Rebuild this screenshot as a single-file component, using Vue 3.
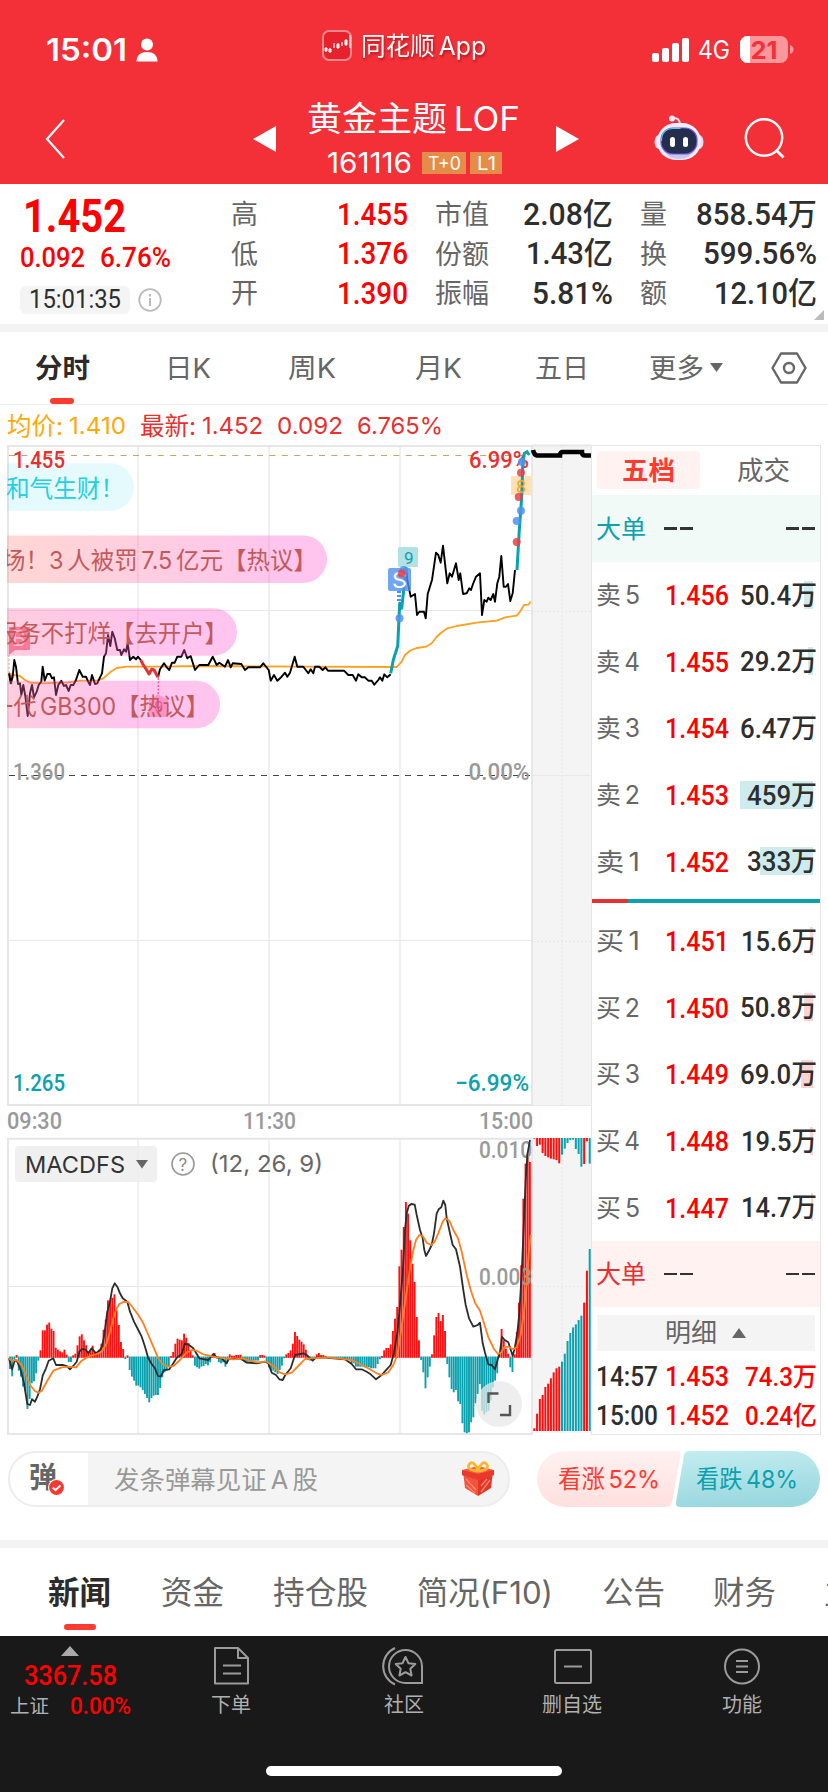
<script setup>
import { h } from 'vue'

// Single line of text fitted to an exact advance width.
const Fit = (p) => {
  const s = +p.s
  const hh = Math.round(s * 1.2)
  return h('svg', { width: p.w, height: hh, viewBox: `0 0 ${p.w} ${hh}`, overflow: 'visible', display: 'block' }, [
    h('text', { x: 0, y: hh / 2 + s * 0.36, 'font-size': s, textLength: p.w, lengthAdjust: 'spacingAndGlyphs' }, p.t),
  ])
}
Fit.props = ['t', 'w', 's']

const stats = [
  { cls: 'c1', rows: [['高', 27, '1.455', 71], ['低', 27, '1.376', 71], ['开', 27, '1.390', 71]] },
  { cls: 'c2', rows: [['市值', 54, '2.08亿', 90], ['份额', 54, '1.43亿', 87], ['振幅', 54, '5.81%', 81]] },
  { cls: 'c3', rows: [['量', 27, '858.54万', 121], ['换', 27, '599.56%', 114], ['额', 27, '12.10亿', 103]] },
]

const sells = [
  ['5', '1.456', '50.4万', 77, 9], ['4', '1.455', '29.2万', 77, 5], ['3', '1.454', '6.47万', 77, 1],
  ['2', '1.453', '459万', 70, 73], ['1', '1.452', '333万', 70, 53],
]
const buys = [
  ['1', '1.451', '15.6万', 76, 3], ['2', '1.450', '50.8万', 77, 9], ['3', '1.449', '69.0万', 77, 12],
  ['4', '1.448', '19.5万', 76, 3], ['5', '1.447', '14.7万', 76, 2],
]

// Chart series are kept at three units per pixel and scaled on output.
const pairs = (s) => s.trim().split(/\s+/).map((p) => p.split(',').map(Number))
const plot = (s, ox, oy) => pairs(s).map(([x, y]) => `${(ox + x / 3).toFixed(1)},${(oy + y / 3).toFixed(1)}`).join(' ')

const price1 = plot('27,730 32,760 38,740 43,690 48,710 54,762 60,760 64,795 70,765 76,798 83,858 90,790 96,765 102,802 110,785 116,765 124,755 128,710 134,752 142,732 150,732 156,745 162,742 168,795 175,765 184,752 192,768 198,765 206,783 212,765 220,765 228,750 238,720 248,740 258,740 263,752 270,765 276,735 285,762 292,760 300,742 306,730 312,680 318,670 324,615 331,648 337,605 344,625 352,660 360,660 364,675 372,658 378,665 383,640 390,690 400,680 408,688 414,680 422,690', 0, 430)
const priceRed = plot('422,690 430,705 440,720 447,732 455,718 462,720 474,742', 0, 430)
const price2 = plot('474,742 480,718 492,700 500,712 508,720 516,698 524,698 532,680 544,680 553,660 562,685 572,678 585,720 598,705 625,705 638,680 650,705 658,698 675,710 684,690 692,712 698,700 724,702 735,720 745,712 780,712 790,700 806,720 812,752 822,735 832,752 845,740 855,728 862,740 870,728 884,680 892,710 910,710 925,730 932,718 940,730 945,710 958,710 968,720 976,712 984,722 1032,722 1045,735 1058,735 1068,752 1075,733 1085,742 1095,742 1105,752 1115,752 1123,764 1135,750 1140,742 1147,752 1153,733 1162,742 1172,733', 0, 430)
const teal1 = plot('302,730 310,690 323,648 329,520 335,535 341,480 348,410', 290, 430)
const price3 = plot('348,410 352,450 362,500 375,492 381,555 388,545 402,545 407,565 413,492 426,450 438,368 445,375 452,398 459,347 465,400 472,460 479,430 486,440 498,400 506,450 511,430 519,492 530,490 538,475 543,480 549,462 558,440 570,430 576,555 583,510 590,515 595,503 602,510 610,492 615,515 622,460 628,440 634,378 641,470 648,470 654,462 661,513 668,490 675,420', 290, 430)
const teal2 = plot('681,420 688,300 695,200 698,110 703,70 711,65 718,75', 290, 430)
const avg = plot('27,730 40,735 60,738 75,750 90,758 130,760 180,758 205,757 240,752 290,752 310,745 330,727 350,714 380,710 480,710 600,708 900,710 1190,711 1205,695 1215,675 1230,662 1250,654 1278,650 1295,640 1310,620 1325,607 1340,596 1370,588 1430,578 1490,572 1515,562 1550,557 1558,548 1572,525 1585,524 1592,515', 0, 430)

const dots = [
  [399.5, 618.3, 'b'], [403.7, 570, 'b'], [401.7, 573.5, 'r'], [516.7, 542, 'r'], [516.7, 521, 'b'],
  [521, 510.7, 'b'], [518.7, 497, 'r'], [521, 472.7, 'r'], [522, 462, 'b'],
]

const dif = plot('27,685 36,718 45,690 52,695 62,720 72,760 82,822 90,825 96,808 105,815 112,800 120,778 128,737 138,715 146,692 160,685 168,705 190,705 200,708 210,718 222,705 230,695 238,665 247,657 258,660 265,670 275,655 288,670 300,660 306,650 313,615 322,545 330,515 337,475 344,460 352,470 360,490 368,505 382,515 390,545 402,575 415,600 425,620 435,650 445,685 455,702 465,715 474,738 482,740 492,720 508,718 518,703 530,683 545,672 555,640 567,645 580,655 598,685 625,690 640,672 650,682 665,685 680,700 685,688 720,685 740,698 770,700 795,695 805,700 815,728 828,735 838,748 848,750 856,735 872,715 885,675 910,670 920,675 938,692 948,683 975,683 1035,688 1055,702 1068,718 1085,718 1100,725 1112,733 1128,748 1145,735 1160,718 1172,705 1182,668 1192,610 1198,550 1208,430 1215,300 1220,250 1226,228 1234,222 1244,224 1250,255 1260,300 1268,325 1273,360 1278,378 1288,360 1295,345 1302,310 1310,250 1316,238 1324,232 1330,212 1336,225 1340,265 1350,310 1358,345 1368,358 1380,410 1390,480 1397,525 1407,565 1420,590 1433,585 1440,578 1448,640 1455,668 1465,703 1475,705 1485,718 1494,685 1500,665 1506,620 1514,630 1525,637 1538,678 1545,650 1552,610 1558,550 1565,430 1571,290 1577,150 1582,75 1590,30', 0, 1130)
const dea = plot('27,685 35,692 50,690 65,705 78,735 90,765 105,783 115,788 125,783 140,755 160,722 185,712 205,710 228,712 245,692 265,680 290,672 305,665 320,640 330,605 340,565 348,540 358,522 370,516 385,516 400,535 415,555 430,580 445,615 460,650 475,685 487,702 505,710 520,708 540,690 560,667 575,660 590,662 610,673 650,682 700,688 730,685 750,692 770,697 800,695 820,708 840,728 855,733 875,728 895,708 915,687 930,685 980,682 1020,686 1055,690 1080,702 1110,718 1130,730 1145,735 1165,727 1180,705 1192,675 1200,625 1212,540 1225,450 1238,368 1248,330 1258,315 1268,318 1280,338 1294,345 1304,335 1315,310 1328,275 1336,265 1348,272 1360,300 1374,325 1385,365 1400,435 1412,480 1425,518 1440,542 1452,580 1465,622 1482,657 1494,672 1503,668 1512,653 1525,650 1540,658 1550,652 1562,615 1572,545 1580,460 1586,370 1592,315', 0, 1130)

const hist = pairs('27,-8 30,-35 36,-57 42,-5 49,6 55,-40 61,-58 68,-88 75,-100 81,-155 88,-125 94,-78 101,-72 107,-48 113,-10 120,20 126,80 133,80 140,97 146,103 153,85 160,78 166,28 173,22 180,17 187,14 193,22 200,7 206,-14 212,-14 219,5 226,10 232,35 238,62 245,68 251,50 258,35 264,17 270,22 277,34 284,15 291,10 297,22 303,40 310,82 316,112 323,170 329,170 335,178 342,188 349,140 355,96 362,45 369,24 375,-5 382,5 388,-38 395,-58 402,-70 408,-85 415,-85 421,-90 428,-98 434,-110 441,-122 447,-135 454,-122 460,-115 467,-113 474,-113 480,-92 487,-60 493,-45 500,-40 506,-28 513,3 519,15 526,40 532,55 539,52 545,50 552,70 559,58 565,42 572,20 578,5 584,-25 591,-30 598,-34 604,-28 611,-26 617,-20 624,-24 630,-15 637,5 643,12 650,-3 656,-15 663,-18 669,-15 675,-28 682,-14 688,8 695,4 702,4 709,6 715,6 721,7 728,-8 734,-14 775,-10 782,6 795,4 801,-15 808,-30 815,-40 828,-45 835,-50 841,-38 847,-25 853,-3 858,8 865,12 871,20 877,40 884,75 890,63 897,52 904,46 910,38 917,22 925,-8 932,-10 940,-5 948,8 955,12 962,6 970,6 977,3 985,-3 1000,-5 1040,-8 1060,-18 1072,-28 1085,-28 1100,-30 1125,-33 1132,-20 1140,-6 1147,3 1152,20 1165,27 1173,38 1179,78 1185,115 1192,150 1198,272 1205,322 1211,390 1217,465 1224,430 1230,350 1237,280 1243,225 1249,120 1256,50 1262,-8 1269,-45 1276,-93 1282,-60 1289,-28 1295,8 1302,65 1308,120 1315,132 1321,108 1328,126 1334,78 1340,-20 1347,-60 1354,-95 1360,-105 1367,-98 1374,-132 1380,-140 1386,-198 1393,-225 1400,-228 1406,-225 1412,-195 1419,-180 1426,-138 1432,-110 1439,-80 1445,-160 1452,-172 1458,-165 1465,-160 1472,-130 1479,-90 1485,-70 1491,-48 1497,8 1504,84 1510,50 1517,25 1524,10 1530,-30 1537,-44 1543,8 1550,75 1556,163 1563,275 1570,475 1576,580 1582,610 1588,585')
const bars = Array.from({ length: 240 }, (_, i) => {
  const x = 30 + i * 6.525
  let k = 0
  while (k < hist.length - 1 && Math.abs(hist[k + 1][0] - x) <= Math.abs(hist[k][0] - x)) k++
  const v = hist[k][1] / 3
  return { x: x / 3 - 0.9, y: v > 0 ? 1357 - v : 1356.5, h: Math.abs(v) + 0.8, up: v > 0 }
})

const auctionTop = [2, 24, 20, 45, 54, 58, 62, 64, 66, 76, 50, 32, 15, 6, 5, 33, 48, 86, 78, 10, 77]
const auctionBottom = [8, 52, 96, 108, 132, 142, 158, 176, 188, 193, 208, 232, 270, 294, 311, 320, 333, 346, 385, 481, 546]
const isRed = (i) => i < 10 || i === 18 || i === 19
const ax = (i) => 533.3 + i * 2.77
</script>

<template>
  <main class="page">
    <header class="top">
      <div class="status">
        <div class="clock">
          <Fit class="semi" t="15:01" w="81" s="31" />
          <svg width="22" height="24" viewBox="0 0 22 24"><circle cx="11" cy="6.5" r="6" fill="#fff" /><path d="M0.5 23.5C.5 17 5 14 11 14S21.500 17 21.500 23.500Z" fill="#fff" /></svg>
        </div>
        <div class="brand">
          <svg width="30" height="31" viewBox="0 0 30 31"><rect x="1" y="1" width="28" height="29" rx="6" fill="#e8222c" stroke="#ff8a8e" stroke-width="2" /><path d="M4 17v5M8 18v5M12 13v5M16 13v6M20 12v4M24 9v7M28 5v13" stroke="#fff" stroke-width="1.200" /><path d="M2.500 18h3v3h-3zM6.500 19h3v3h-3zM14.500 14h3v4h-3zM22.500 10h3v5h-3z" fill="#fff" /></svg>
          <Fit class="shadow" t="同花顺 App" w="125" s="25" />
        </div>
        <div class="signal">
          <svg width="38" height="24" viewBox="0 0 38 24"><rect x="0" y="15" width="7" height="9" rx="2" fill="#fff" /><rect x="10" y="10" width="7" height="14" rx="2" fill="#fff" /><rect x="20" y="5" width="7" height="19" rx="2" fill="#fff" /><rect x="30" y="0" width="7" height="24" rx="2" fill="#fff" /></svg>
          <Fit t="4G" w="32" s="25" />
          <svg width="54" height="28" viewBox="0 0 54 28"><defs><clipPath id="bat"><rect width="48" height="27" rx="7.500" /></clipPath></defs><g clip-path="url(#bat)"><rect width="48" height="27" fill="#f9979b" /><rect width="10" height="27" fill="#fff" /></g><path d="M50 9q3.500 1.500 3.500 4.500t-3.500 4.500z" fill="#f9979b" /><text x="10.500" y="22.500" font-size="24.500" font-weight="700" fill="#f33038" textLength="27" lengthAdjust="spacingAndGlyphs">21</text></svg>
        </div>
      </div>
      <div class="nav">
        <svg width="22" height="40" viewBox="0 0 22 40"><path d="M20 1 3 20l17 19" fill="none" stroke="#fff" stroke-width="2.200" /></svg>
        <svg width="23" height="26" viewBox="0 0 23 26"><path d="M0 13 23 0v26z" fill="#fff" /></svg>
        <div class="name">
          <Fit t="黄金主题 LOF" w="213" s="34.500" />
          <div class="code">
            <Fit t="161116" w="85" s="28" />
            <span class="tag t0"><Fit t="T+0" w="33" s="19" /></span>
            <span class="tag"><Fit t="L1" w="19" s="19" /></span>
          </div>
        </div>
        <svg width="23" height="26" viewBox="0 0 23 26"><path d="M23 13 0 0v26z" fill="#fff" /></svg>
        <svg class="bot" width="50" height="46" viewBox="0 0 50 46">
          <path d="M18 3q8-1 8 7" fill="none" stroke="#e9e9fb" stroke-width="2" /><circle cx="18" cy="3.500" r="3" fill="#e9e9fb" />
          <ellipse cx="5" cy="27" rx="4.500" ry="7" fill="#dedef5" /><ellipse cx="45" cy="27" rx="4.500" ry="7" fill="#dedef5" />
          <rect x="3" y="8" width="44" height="37" rx="18.500" fill="#ededfb" /><path d="M8 34q6 10 17 10t17-10q-5 5-17 5T8 34" fill="#c9c8ea" />
          <rect x="7" y="13" width="36" height="26" rx="12" fill="#242d4c" stroke="#7357e8" stroke-width="1.200" />
          <path d="M7.500 26v-2q1-10 11-10.500h8" fill="none" stroke="#53c9dd" stroke-width="1.200" />
          <rect x="16" y="22" width="5" height="10" rx="2.500" fill="#fff" /><rect x="29" y="22" width="5" height="10" rx="2.500" fill="#fff" />
        </svg>
        <svg width="42" height="42" viewBox="0 0 42 42"><circle cx="20" cy="19.500" r="18.200" fill="none" stroke="#fff" stroke-width="2.400" /><path d="m32.500 32.500 7 7" stroke="#fff" stroke-width="2.800" /></svg>
      </div>
    </header>

    <section class="quote">
      <div class="main-quote">
        <Fit class="din big red" t="1.452" w="103" s="46" />
        <div class="chg din red"><Fit t="0.092" w="65" s="28" /><Fit t="6.76%" w="71" s="28" /></div>
        <div class="stamp">
          <span class="pill din"><Fit t="15:01:35" w="92" s="25" /></span>
          <svg width="24" height="24" viewBox="0 0 24 24"><circle cx="12" cy="12" r="10.800" fill="none" stroke="#bbb" stroke-width="1.800" /><path d="M12 10v8M12 6v2.500" stroke="#bbb" stroke-width="2" /></svg>
        </div>
      </div>
      <div v-for="c in stats" :key="c.cls" class="col" :class="c.cls">
        <div v-for="r in c.rows" :key="r[0]" class="stat">
          <Fit class="lbl" :t="r[0]" :w="r[1]" s="27" /><Fit class="din val" :t="r[2]" :w="r[3]" s="30.500" />
        </div>
      </div>
      <svg class="corner" width="10" height="10" viewBox="0 0 10 10"><path d="M10 0v10H0z" fill="#bbb" /></svg>
    </section>

    <nav class="periods">
      <span class="on"><Fit t="分时" w="55" s="27.500" /></span>
      <Fit t="日K" w="46" s="27.500" /><Fit t="周K" w="48" s="27.500" /><Fit t="月K" w="47" s="27.500" /><Fit t="五日" w="54" s="27" />
      <span class="more"><Fit t="更多" w="55" s="27.500" /><svg width="13" height="10" viewBox="0 0 13 10"><path d="M0 0h13L6.500 9z" fill="#666" /></svg></span>
      <svg width="36" height="32" viewBox="0 0 36 32"><path d="M10 1.500h16L34.500 16 26 30.500H10L1.500 16z" fill="none" stroke="#666" stroke-width="2.400" stroke-linejoin="round" /><circle cx="18" cy="16" r="5" fill="none" stroke="#666" stroke-width="2.400" /></svg>
    </nav>

    <div class="latest">
      <Fit class="amber" t="均价:" w="56" s="24.500" /><Fit class="amber" t="1.410" w="57" s="23.500" />
      <Fit class="crim m1" t="最新:" w="56" s="24.500" /><Fit class="crim" t="1.452" w="61" s="23.500" />
      <Fit class="crim m2" t="0.092" w="66" s="23.500" /><Fit class="crim m2" t="6.765%" w="86" s="23.500" />
    </div>

    <div class="market">
      <svg class="charts" width="591" height="992" viewBox="0 445 591 992">
        <defs>
          <clipPath id="plotArea"><rect x="7" y="445" width="526" height="662" /></clipPath>
          <linearGradient id="pk" x1="0" x2="1"><stop offset="0" stop-color="#ff7c90" /><stop offset="0.700" stop-color="#ff58ce" /></linearGradient>
          <linearGradient id="pk2" x1="0" x2="1"><stop offset="0.150" stop-color="#ff9080" /><stop offset="0.900" stop-color="#ff58ce" /></linearGradient>
        </defs>
        <rect x="533" y="446" width="58" height="660" fill="#f4f4f4" />
        <rect x="533" y="1138" width="58" height="295" fill="#f4f4f4" />
        <g fill="none" stroke="#f0f0f0" stroke-width="2">
          <path d="M138 446v660M269 446v660M400 446v660M138 1139v294M269 1139v294M400 1139v294" />
          <path d="M8 610.500h524M8 940.500h524M8 1286.500h524" stroke="#e8e8e8" stroke-width="1.200" />
          <path d="M562 447v660M533 611.500h58M533 941.500h58M562 1139v294M533 1286.500h58" stroke="#e9e9e9" stroke-width="1.500" stroke-dasharray="2 2" />
          <path d="M533 775.500h58M533 1105.500h58" stroke="#e8e8e8" stroke-width="1.200" />
        </g>
        <path d="M8 446V1105H532V446zM8 1138.800V1434H532V1138.800zM532 445.500h59" fill="none" stroke="#e6e6e6" stroke-width="1.900" />
        <path d="M9 455.500H525" stroke="#c9a468" stroke-width="1.200" stroke-dasharray="6 6.400" />
        <path d="M9 775.500H530" stroke="#444" stroke-width="1.200" stroke-dasharray="6 6" />

        <g clip-path="url(#plotArea)">
          <path d="M9 627h21v23H15l-6 5z" fill="#fb5d6f" opacity=".8" />
          <text x="12" y="646" font-size="21" fill="#fff" opacity=".8">B</text>
          <path d="M9 655v20" stroke="#f99" stroke-dasharray="2 2" /><path d="M9 672l4 4-1 9-3-5z" fill="#e83030" />
          <path d="m158 694 6 4h4v19h-19v-19h4z" fill="#ffb3c6" /><path d="M158.300 678v17" stroke="#f4548a" stroke-width="1.300" stroke-dasharray="2 1.500" />
          <text x="154.500" y="712" font-size="14" fill="#f0507a">9</text>
          <g fill="none" stroke-linejoin="round">
            <polyline :points="avg" stroke="#ff9f1e" stroke-width="1.800" />
            <g stroke="#000" stroke-width="1.900"><polyline :points="price1" /><polyline :points="price2" /><polyline :points="price3" /></g>
            <polyline :points="priceRed" stroke="#e83030" stroke-width="3" />
            <polyline :points="teal1" stroke="#0ba1ae" stroke-width="3" />
          </g>
          <rect x="398" y="547" width="20" height="20" rx="1.500" fill="#b2e2e6" />
          <text class="din" x="404" y="564" font-size="17" fill="#0ba1ae">9</text>
          <rect x="388" y="568" width="23" height="23" rx="2" fill="#4e90ef" opacity=".8" />
          <text x="392" y="587.500" font-size="22" fill="#fff" textLength="15" lengthAdjust="spacingAndGlyphs">S</text>
          <path d="M399 591v10" stroke="#4e90ef" stroke-width="4" stroke-dasharray="2 2" />
          <rect x="511" y="476" width="20" height="19" fill="#ffe1b5" />
          <text class="din crim mid" x="469" y="468" font-size="23" textLength="60" lengthAdjust="spacingAndGlyphs">6.99%</text>
          <polyline :points="teal2" fill="none" stroke="#0ba1ae" stroke-width="3" />
          <text class="din" x="516" y="493" font-size="18" fill="#ff9f1e">8</text>
          <circle v-for="(d, i) in dots" :key="i" :cx="d[0]" :cy="d[1]" r="4" :fill="d[2] === 'b' ? '#4e94f0' : '#e84048'" opacity=".85" />
          <g>
            <rect x="-30" y="463.300" width="164" height="47.500" rx="23.700" fill="#14cfe6" opacity=".11" />
            <rect x="-60" y="535.500" width="387" height="47.500" rx="23.700" fill="url(#pk2)" opacity=".35" />
            <rect x="-60" y="608.300" width="297" height="47.500" rx="23.700" fill="url(#pk)" opacity=".35" />
            <rect x="-60" y="680.700" width="280" height="47.500" rx="23.700" fill="url(#pk)" opacity=".35" />
          </g>
          <g class="tight" font-size="24" fill="#c25a5c">
            <text x="6" y="497" fill="#22d0e2" textLength="118" lengthAdjust="spacingAndGlyphs">和气生财！</text>
            <text x="2" y="569.300" textLength="315" lengthAdjust="spacingAndGlyphs">场！3 人被罚 7.5 亿元【热议】</text>
            <text x="-6" y="642" textLength="234" lengthAdjust="spacingAndGlyphs">服务不打烊【去开户】</text>
            <text x="-10" y="714.500" textLength="219" lengthAdjust="spacingAndGlyphs">一代 GB300【热议】</text>
          </g>
        </g>
        <path d="M533 450q1 5 4 5.500h23q0-3.500 3-3.500h19q0 3.500 3 3.500h6" fill="none" stroke="#000" stroke-width="4.500" />

        <g class="din mid" font-size="23">
          <text class="crim" x="13" y="468" textLength="52" lengthAdjust="spacingAndGlyphs">1.455</text>
          <g fill="#999">
            <text x="13" y="779.500" textLength="52" lengthAdjust="spacingAndGlyphs">1.360</text>
            <text x="468.500" y="779.500" textLength="61" lengthAdjust="spacingAndGlyphs">0.00%</text>
            <text x="7" y="1129" textLength="55" lengthAdjust="spacingAndGlyphs">09:30</text>
            <text x="243" y="1129" textLength="53" lengthAdjust="spacingAndGlyphs">11:30</text>
            <text x="479" y="1129" textLength="54" lengthAdjust="spacingAndGlyphs">15:00</text>
          </g>
          <g fill="#0ba1ae">
            <text x="13" y="1091" textLength="52" lengthAdjust="spacingAndGlyphs">1.265</text>
            <text x="455" y="1091" textLength="74" lengthAdjust="spacingAndGlyphs">−6.99%</text>
          </g>
        </g>

        <g><rect v-for="(b, i) in bars" :key="i" :x="b.x" :y="b.y" width="1.900" :height="b.h" :fill="b.up ? '#ff1010' : '#0ba1ae'" /></g>
        <g class="din mid" font-size="23" fill="#999">
          <text x="479" y="1158" textLength="53" lengthAdjust="spacingAndGlyphs">0.010</text>
          <text x="479" y="1284.500" textLength="53" lengthAdjust="spacingAndGlyphs">0.003</text>
        </g>
        <polyline :points="dif" fill="none" stroke="#2c2c2c" stroke-width="1.800" stroke-linejoin="round" />
        <polyline :points="dea" fill="none" stroke="#ff7f1e" stroke-width="1.800" stroke-linejoin="round" />
        <g>
          <rect v-for="(v, i) in auctionTop" :key="'t' + i" :x="ax(i)" y="1138" width="2" :height="v / 3" :fill="isRed(i) ? '#ff0d0d' : '#0ba1ae'" />
          <rect v-for="(v, i) in auctionBottom" :key="'b' + i" :x="ax(i)" :y="1431 - v / 3" width="2" :height="v / 3" :fill="isRed(i) ? '#ff0d0d' : '#0ba1ae'" />
        </g>

        <rect x="15" y="1146" width="142" height="36" rx="4" fill="#ededed" opacity=".85" />
        <text x="25" y="1173" font-size="23.500" fill="#333" textLength="100" lengthAdjust="spacingAndGlyphs">MACDFS</text>
        <path d="M136 1160h12l-6 8.500z" fill="#666" />
        <circle cx="183" cy="1164" r="11" fill="none" stroke="#999" stroke-width="1.600" />
        <text x="178.500" y="1170.500" font-size="17" fill="#888">?</text>
        <text x="210" y="1172" font-size="23.500" fill="#666" textLength="113" lengthAdjust="spacingAndGlyphs">(12, 26, 9)</text>
        <circle cx="499" cy="1404" r="23" fill="#e8e8e8" opacity=".75" />
        <path d="M488.500 1403v-9.500h10M510 1405v10h-10" fill="none" stroke="#555" stroke-width="2.400" />
      </svg>

      <aside class="book">
        <div class="book-tabs">
          <span class="bt"><Fit t="五档" w="53" s="26" /></span><span class="bt off"><Fit t="成交" w="53" s="26" /></span>
        </div>
        <div class="large sell"><Fit t="大单" w="50" s="25" /><i></i><i></i><i class="r"></i><i></i></div>
        <div v-for="r in sells" :key="'s' + r[0]" class="level">
          <Fit class="lv" :t="'卖 ' + r[0]" w="44" s="25" /><Fit class="din val red" :t="r[1]" w="64" s="28" />
          <span class="qty"><b class="bar" :style="{ width: r[4] + 'px' }"></b><Fit class="din val" :t="r[2]" :w="r[3]" s="27.500" /></span>
        </div>
        <div class="ratio"></div>
        <div v-for="r in buys" :key="'b' + r[0]" class="level buy">
          <Fit class="lv" :t="'买 ' + r[0]" w="44" s="25" /><Fit class="din val red" :t="r[1]" w="64" s="28" />
          <span class="qty"><b class="bar" :style="{ width: r[4] + 'px' }"></b><Fit class="din val" :t="r[2]" :w="r[3]" s="27.500" /></span>
        </div>
        <div class="large buyrow"><Fit t="大单" w="50" s="25" /><i></i><i></i><i class="r"></i><i></i></div>
        <div class="detail"><Fit t="明细" w="52" s="26" /><svg width="14" height="10" viewBox="0 0 14 10"><path d="M7 0l7 10H0z" fill="#666" /></svg></div>
        <div class="trade"><Fit class="din val" t="14:57" w="62" s="27" /><Fit class="din val red" t="1.453" w="64" s="28" /><Fit class="din val red end" t="74.3万" w="72" s="26" /></div>
        <div class="trade"><Fit class="din val" t="15:00" w="62" s="27" /><Fit class="din val red" t="1.452" w="64" s="28" /><Fit class="din val red end" t="0.24亿" w="72" s="26" /></div>
      </aside>
    </div>

    <section class="talk">
      <div class="input">
        <div class="danmu">
          <Fit class="bold" t="弹" w="28" s="29" />
          <svg class="check" width="17" height="17" viewBox="0 0 17 17"><circle cx="8.500" cy="8.500" r="8.500" fill="#fff" /><circle cx="8.500" cy="8.500" r="7.400" fill="#f8382f" /><path d="m4.800 8.500 2.700 2.700 5-5" fill="none" stroke="#fff" stroke-width="2" /></svg>
        </div>
        <Fit class="ph" t="发条弹幕见证 A 股" w="204" s="25.500" />
        <svg class="gift" width="34" height="36" viewBox="0 0 34 36">
          <path d="M2 10 17 15v20L4 27z" fill="#f2533c" /><path d="M32 10 17 15v20l13-8z" fill="#e23427" /><path d="M1 9 17 5l16 4v5l-16 5-16-5z" fill="#fb5a45" /><path d="m1 9 16 4 16-4v5l-16 5-16-5z" fill="#e9392c" />
          <path d="m5 18 10 11M5 24l9 8M20 31l9-12M20 25l6-7" stroke="#ff8a6e" stroke-width="1.300" />
          <path d="M17 10C9 10 5 6 9 2.500 12 0 16 5 17 10 18 5 22 0 25 2.500 29 6 25 10 17 10" fill="none" stroke="#f7b733" stroke-width="2.800" />
        </svg>
      </div>
      <div class="vote">
        <svg width="283" height="56" viewBox="0 0 283 56">
          <defs>
            <linearGradient id="up" x2="0" y2="1"><stop stop-color="#fff1f0" /><stop offset="1" stop-color="#ffe0de" /></linearGradient>
            <linearGradient id="dn" x2=".2" y2="1"><stop stop-color="#c4edf0" /><stop offset="1" stop-color="#9ad8df" /></linearGradient>
          </defs>
          <path d="M28 0H140Q144 0 143.500 4L135 51Q134 56 129 56H28A28 28 0 0 1 28 0" fill="url(#up)" />
          <path d="M255 0H152Q148 0 147 4L139 51Q138 56 143 56H255A28 28 0 0 0 255 0" fill="url(#dn)" />
          <g class="tight" font-size="24.500">
            <text x="21" y="37" fill="#ff3b30" textLength="102" lengthAdjust="spacingAndGlyphs">看涨 52%</text>
            <text x="159" y="37" fill="#0ba1ae" textLength="102" lengthAdjust="spacingAndGlyphs">看跌 48%</text>
          </g>
        </svg>
      </div>
    </section>

    <nav class="news">
      <span class="on"><Fit t="新闻" w="63" s="31.500" /></span>
      <Fit t="资金" w="63" s="31.500" /><Fit t="持仓股" w="95" s="31.500" /><Fit t="简况(F10)" w="136" s="31.500" /><Fit t="公告" w="63" s="31.500" /><Fit t="财务" w="63" s="31.500" /><Fit t="主" w="31" s="31.500" />
    </nav>

    <footer class="dock">
      <div class="index">
        <svg width="18" height="10" viewBox="0 0 18 10"><path d="M9 0l9 10H0z" fill="#aaa" /></svg>
        <Fit class="din val red" t="3367.58" w="93" s="28.500" />
        <div class="sh"><Fit t="上证" w="39" s="19.500" /><Fit class="din red val" t="0.00%" w="61" s="24" /></div>
      </div>
      <div class="act a1">
        <svg width="42" height="40" viewBox="0 0 42 40"><path d="M5 2h23l10 10v25.500H5zM28 2v10h10" fill="none" stroke="#9b9b9b" stroke-width="2" stroke-linejoin="round" /><path d="M13 19.500h18M13 27.500h18" stroke="#9b9b9b" stroke-width="2" /></svg>
        <Fit t="下单" w="40" s="20" />
      </div>
      <div class="act a2">
        <svg width="42" height="40" viewBox="2 0 42 40"><path d="M24.500 4A16.500 16.500 0 0 0 24.500 37H41V20.500A16.500 16.500 0 0 0 24.500 4zM14 2a20 20 0 0 0 0 36.500" fill="none" stroke="#9b9b9b" stroke-width="2" /><path d="m24.500 11 3 6.200 6.800.8-5 4.700 1.300 6.800-6.100-3.300-6.100 3.300 1.300-6.800-5-4.700 6.800-.8z" fill="none" stroke="#9b9b9b" stroke-width="2" stroke-linejoin="round" /></svg>
        <Fit t="社区" w="40" s="20" />
      </div>
      <div class="act a3">
        <svg width="42" height="40" viewBox="-2 0 42 40"><rect x="2" y="4" width="36" height="33" rx="1.500" fill="none" stroke="#9b9b9b" stroke-width="2" /><path d="M11 20.500h18" stroke="#9b9b9b" stroke-width="2" /></svg>
        <Fit t="删自选" w="60" s="20" />
      </div>
      <div class="act a4">
        <svg width="42" height="40" viewBox="0 0 42 40"><circle cx="21" cy="20.500" r="17" fill="none" stroke="#9b9b9b" stroke-width="2" /><path d="M15 15h12M15 20.500h12M15 26h12" stroke="#9b9b9b" stroke-width="2" /></svg>
        <Fit t="功能" w="40" s="20" />
      </div>
      <div class="home"></div>
    </footer>
  </main>
</template>

<style>
body { margin: 0; background: #fff; }
</style>

<style scoped>
.page { width: 828px; height: 1792px; overflow: hidden; background: #fff; font-family: Inter, "Noto Sans CJK SC", sans-serif; display: flex; flex-direction: column; fill: #666; }
.page > * { flex: none; box-sizing: border-box; }
svg { display: block; flex: none; overflow: visible; }
.din { font-family: Roboto, "Noto Sans CJK SC", sans-serif; }
.val { fill: #2e2e2e; font-weight: 500; }
.mid { font-weight: 500; }
.red { fill: #f00; }
.semi { font-weight: 600; }
.bold { font-weight: 700; }
.crim { fill: #e83030; }
.amber { fill: #ffa90a; }
.tight, .name, .brand, .lv, .ph { word-spacing: -3px; }

.top { height: 184px; background: #f33038; fill: #fff; }
.status { height: 96px; display: flex; }
.clock { width: 275px; padding: 31px 0 0 46px; display: flex; gap: 9px; align-items: center; height: 37px; }
.brand { display: flex; gap: 9px; align-items: center; padding-top: 30px; height: 31px; margin-left: 1px; }
.shadow { filter: drop-shadow(1px 2px 1px rgba(120, 0, 0, .5)); }
.signal { display: flex; align-items: center; height: 28px; padding-top: 36px; margin-left: 166px; gap: 8px; }
.signal > :nth-child(3) { margin-left: 2px; }
.nav { display: grid; grid-template-columns: 209px 54px 249px 98px 90px 60px; padding-left: 44px; align-items: start; padding-top: 0; }
.nav > svg { margin-top: 30px; }
.nav > svg:first-child { margin-top: 23px; }
.nav > .bot { margin-top: 19px; }
.nav > svg:last-child { margin-top: 22px; }
.name { margin-top: 2px; }
.code { display: flex; align-items: center; margin: 13px 0 0 20px; height: 22px; }
.tag { background: #e58c48; width: 32px; height: 22px; display: flex; align-items: center; justify-content: center; margin-left: 4px; }
.tag.t0 { width: 44px; margin-left: 10px; }

.quote { height: 148px; border-bottom: 8px solid #f4f4f4; display: flex; position: relative; }
.main-quote { width: 231px; padding: 4px 0 0 20px; box-sizing: border-box; }
.big { font-weight: 700; margin-left: 3px; }
.chg { display: flex; gap: 15px; margin-top: -3px; font-weight: 500; }
.stamp { display: flex; gap: 8px; align-items: center; margin-top: 12px; }
.pill { width: 110px; height: 28px; border-radius: 6px; background: #f4f4f4; display: flex; align-items: center; justify-content: center; fill: #2e2e2e; }
.pill svg { position: relative; top: -1px; }
.col { display: grid; grid-template-rows: repeat(3, 39.700px); padding-top: 10px; }
.stat { display: flex; justify-content: space-between; align-items: center; height: 40px; }
.c1 { width: 177px; }
.c1 .val { fill: #f00; }
.c2 { width: 178px; margin-left: 27px; }
.c3 { width: 177px; margin-left: 27px; }
.corner { position: absolute; right: 4px; bottom: 4px; }

.periods { height: 73px; border-bottom: 1px solid #eee; display: grid; grid-template-columns: 130px 123px 127px 120px 114px 122px 40px; padding-left: 35px; align-items: center; }
.on { display: flex; flex-direction: column; position: relative; fill: #2b2b2b; font-weight: 700; }
.on::after { content: ""; position: absolute; width: 24px; height: 6px; border-radius: 3px; background: #ff3b30; left: 15px; top: 46px; }
.more { display: flex; gap: 6px; align-items: center; }
.latest { height: 40px; display: flex; align-items: center; padding: 2px 0 0 7px; }
.latest .amber + .amber, .latest .m1 + .crim { margin-left: 6px; }
.latest .m1 { margin-left: 14px; }
.latest .m2 { margin-left: 14px; }

.market { height: 992px; display: flex; }
.book { width: 230px; height: 990px; box-sizing: border-box; border: 1.500px solid #e6e6e6; background: #fff; }
.book-tabs { height: 49px; display: flex; padding: 5px 0 0 5px; box-sizing: border-box; }
.bt { width: 103px; height: 38px; border-radius: 4px; background: #fff2f1; display: flex; align-items: center; justify-content: center; fill: #ff3b30; font-weight: 700; }
.bt.off { background: none; fill: #666; font-weight: 400; margin-left: 12px; }
.large { height: 67px; display: flex; align-items: center; padding: 0 4px; }
.large i { width: 13px; height: 2.500px; background: #333; margin-left: 3px; }
.large i:nth-of-type(1) { margin-left: 18px; }
.large i.r { margin-left: 93px; }
.sell { background: #f1faf6; fill: #0ba1ae; }
.buyrow { background: #fff2f1; fill: #e83030; height: 66px; }
.level { height: 66.600px; display: grid; grid-template-columns: 69px 68px 1fr; align-items: center; padding: 0 3px 0 4px; }
.qty { position: relative; display: flex; justify-content: flex-end; }
.qty > svg { position: relative; }
.bar { position: absolute; right: 4px; top: 2px; height: 28px; background: #ceebee; }
.buy .bar { background: #fbd3d3; }
.ratio { height: 4px; margin: 4px 0 5px; background: linear-gradient(90deg, #e83030 36px, #0ba1ae 36px); }
.detail { margin: 8px 5px 6px; height: 36px; background: #f4f4f4; display: flex; gap: 15px; align-items: center; padding-left: 68px; }
.trade { height: 39px; display: grid; grid-template-columns: 69px 64px 1fr; align-items: center; padding: 0 3px 0 4px; }
.end { justify-self: end; }

.talk { height: 111px; border-bottom: 8px solid #f4f4f4; display: flex; padding: 14px 8px 0; justify-content: space-between; }
.input { width: 502px; height: 56px; box-sizing: border-box; border: 2px solid #ededed; border-radius: 28px; background: #f4f4f4; display: flex; align-items: center; overflow: hidden; }
.danmu { width: 78px; height: 52px; background: #fff; position: relative; display: flex; align-items: center; padding: 0 0 3px 19px; box-sizing: border-box; }
.check { position: absolute; left: 38px; top: 26px; }
.ph { fill: #999; margin-left: 26px; }
.gift { margin-left: auto; margin-right: 13px; }

.news { height: 88px; display: grid; grid-template-columns: 113px 112px 144px 185px 111px 111px 31px; padding: 2px 0 0 48px; align-items: center; }
.news .on::after { width: 32px; left: 16px; top: 50px; }

.dock { height: 156px; background: #191919; display: flex; fill: #b0b0b0; position: relative; }
.index { width: 140px; display: flex; flex-direction: column; align-items: center; padding-top: 10px; box-sizing: border-box; }
.index > svg:nth-child(2) { margin-top: 2px; }
.sh { display: flex; gap: 21px; align-items: center; margin-top: -1px; }
.act { display: flex; flex-direction: column; align-items: center; padding-top: 10px; gap: 7px; width: 60px; height: 80px; }
.a1 { margin-left: 61px; }
.a2 { margin-left: 113px; }
.a3 { margin-left: 108px; }
.a4 { margin-left: 110px; }
.home { position: absolute; left: 266px; top: 130px; width: 296px; height: 10px; border-radius: 5px; background: #fff; }
</style>
